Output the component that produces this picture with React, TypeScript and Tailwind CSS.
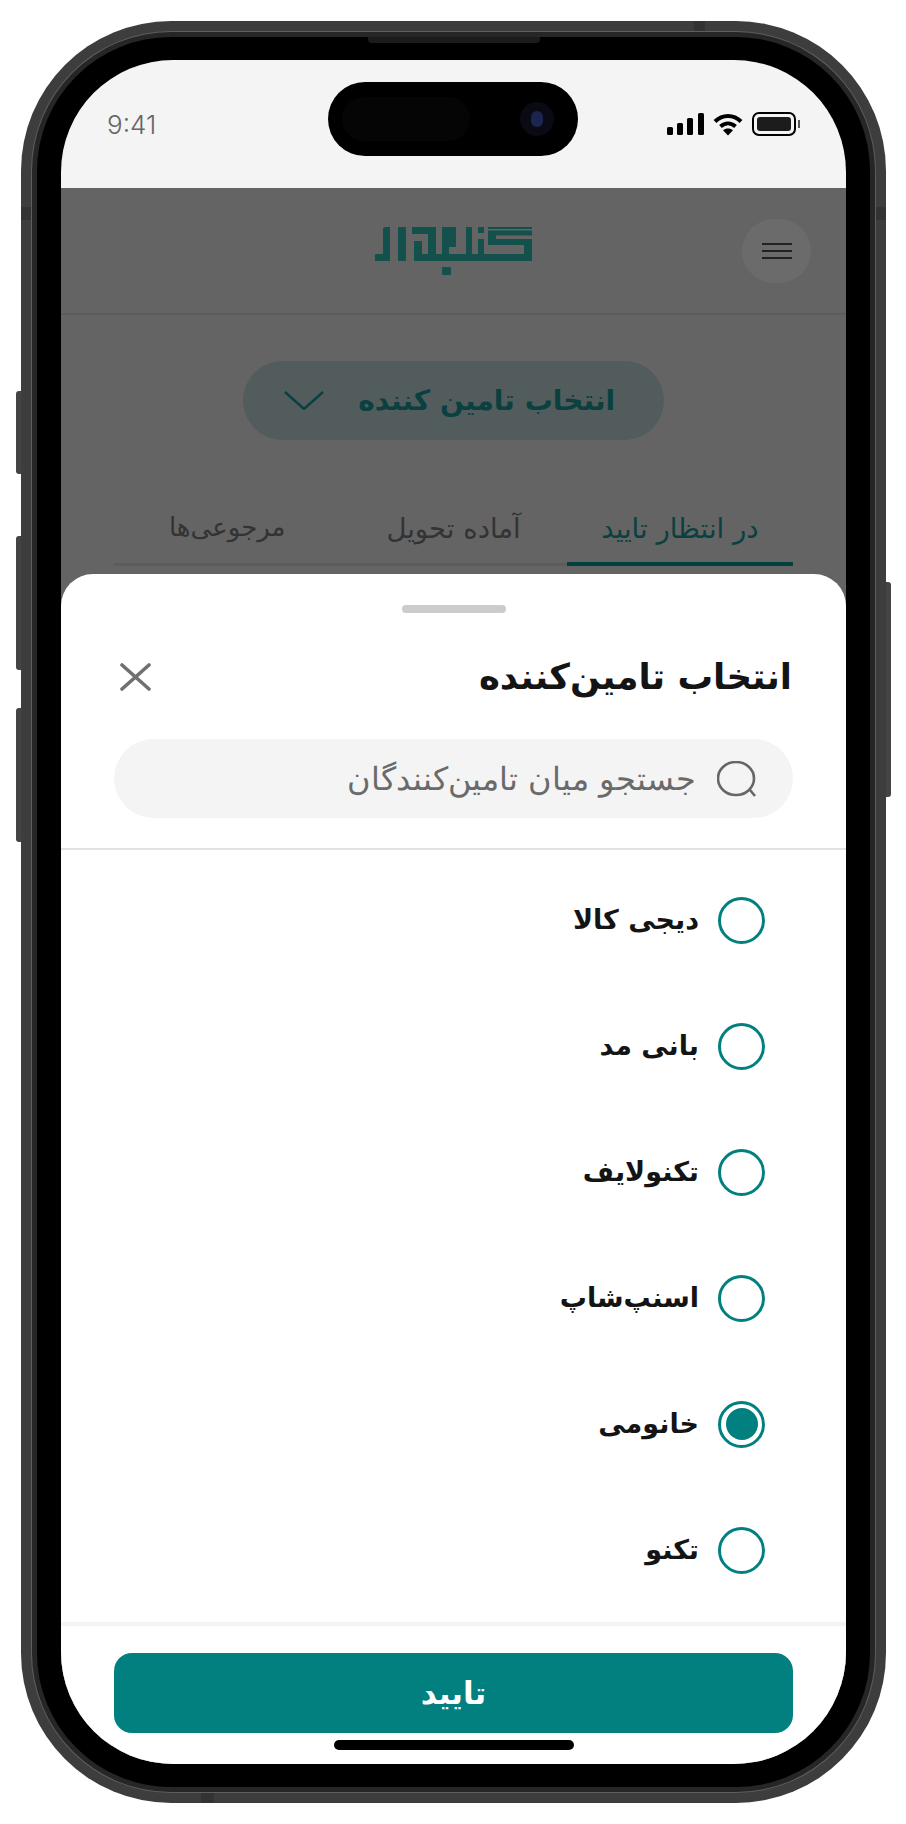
const SUPPLIERS = [
  { name: "دیجی کالا", selected: false },
  { name: "بانی مد", selected: false },
  { name: "تکنولایف", selected: false },
  { name: "اسنپ‌شاپ", selected: false },
  { name: "خانومی", selected: true },
  { name: "تکنو", selected: false },
];

function Logo() {
  return (
    <svg width="158" height="48" viewBox="0 0 158 48" fill="#14504c">
      <path d="M0 27h8V2q0-2 2-2h5v34H0z" />
      <rect x="23" y="0" width="8" height="34" rx="1" />
      <path d="M39 34V14h8v13h6V7H37V0h24v27h88V18h-36V3.500h44v5h-36V12h36v22z" />
      <path d="M67 0h14v20h-7V7h-7v20h-0z" />
      <rect x="67" y="0" width="7" height="27" />
      <rect x="91" y="0" width="6" height="27" />
      <rect x="103" y="0" width="6" height="6" />
      <rect x="103" y="12" width="6" height="15" />
      <rect x="113" y="0" width="44" height="2" />
      <rect x="67" y="40" width="9" height="8" rx="1" />
    </svg>
  );
}

function StatusIcons() {
  return (
    <div className="flex items-center gap-[9px]">
      <svg width="37" height="22" viewBox="0 0 37 22" fill="#000">
        <rect x="0" y="14" width="6" height="8" rx="1.5" />
        <rect x="10" y="10" width="6" height="12" rx="1.5" />
        <rect x="20" y="5" width="6" height="17" rx="1.5" />
        <rect x="31" y="0" width="6" height="22" rx="1.5" />
      </svg>
      <svg width="30" height="23" viewBox="0 0 30 23" fill="none" stroke="#000" strokeWidth="4">
        <path d="M2 8.500C9.500 1 20.500 1 28 8.500" />
        <path d="M7.500 13.500c4.500-4 10.500-4 15 0" />
        <path d="M15 22.500l-5-5.200c3-2.400 7-2.400 10 0z" fill="#000" stroke="none" />
      </svg>
      <div className="flex items-center gap-[2px]">
        <div className="flex h-[24px] w-[44px] items-center rounded-[7px] border-2 border-black p-[3px]">
          <div className="h-full w-full rounded-[3px] bg-[#1c1c1c]" />
        </div>
        <div className="h-[8px] w-[2px] bg-[#555]" />
      </div>
    </div>
  );
}

function Radio({ selected }: { selected: boolean }) {
  return (
    <span className="flex h-[47px] w-[47px] shrink-0 items-center justify-center rounded-full border-[3px] border-[#028080]">
      {selected && <span className="h-[32px] w-[32px] rounded-full bg-[#028080]" />}
    </span>
  );
}

function BackgroundPage() {
  return (
    <div className="flex h-full flex-col bg-[#646464]">
      <div className="grid h-[127px] grid-cols-[1fr_auto_1fr] items-center border-b-2 border-[#5c5c5c]">
        <button className="mr-[35px] flex h-[64px] w-[69px] items-center justify-center justify-self-start rounded-full bg-[#6b6b6b]">
          <svg width="30" height="18" viewBox="0 0 30 18" stroke="#222222" strokeWidth="2">
            <path d="M0 2h30M0 9h30M0 16h30" />
          </svg>
        </button>
        <Logo />
        <div />
      </div>
      <button className="mx-auto mt-[46px] flex h-[79px] w-[421px] items-center justify-between rounded-full bg-[#525c5c] pl-[41px] pr-[49px] text-[28px] font-bold text-[#0a4040]">
        <span>انتخاب تامین کننده</span>
        <svg width="40" height="19" viewBox="0 0 40 19" fill="none" stroke="#0a4040" strokeWidth="2.500">
          <path d="M1 1l19 17L39 1" />
        </svg>
      </button>
      <div className="mx-[53px] mt-[68px] grid grid-cols-3 border-b-[3px] border-[#5c5c5c] text-[27.500px]">
        <div className="-mb-[3px] flex h-[58px] justify-center border-b-4 border-[#044040] text-[#0a4040]">در انتظار تایید</div>
        <div className="flex h-[54px] justify-center text-[#333]">آماده تحویل</div>
        <div className="flex h-[54px] justify-center text-[26px] text-[#333]">مرجوعی‌ها</div>
      </div>
    </div>
  );
}

function SupplierSheet() {
  return (
    <div className="absolute inset-x-0 bottom-0 top-[514px] rounded-t-[32px] bg-white">
      <div className="mx-auto mt-[31px] h-[8px] w-[104px] rounded-full bg-[#cccccc]" />
      <div className="mt-[44px] flex h-[40px] items-center justify-between pl-[59px] pr-[54px]">
        <h2 className="text-[35.500px] font-bold text-[#141414]">انتخاب تامین‌کننده</h2>
        <svg width="31" height="28" viewBox="0 0 31 28" fill="none" stroke="#707070" strokeWidth="3.600" strokeLinecap="round">
          <path d="M2 2l27 24M29 2L2 26" />
        </svg>
      </div>
      <div className="mx-[53px] mt-[42px] flex h-[79px] items-center gap-[21px] rounded-full bg-[#f4f4f4] pr-[36px]">
        <svg width="40" height="36" viewBox="0 0 40 36" fill="none" stroke="#666666" strokeWidth="2.600">
          <ellipse cx="19" cy="17.500" rx="18" ry="16.500" />
          <path d="M33 29l5 6" />
        </svg>
        <span className="text-[32px] font-light text-[#6a6a6a]">جستجو میان تامین‌کنندگان</span>
      </div>
      <div className="mt-[30px] h-[2px] bg-[#e2e2e2]" />
      <ul className="border-b-4 border-[#f4f4f4] pb-[9px] pt-[7px]">
        {SUPPLIERS.map((s) => (
          <li key={s.name} className="flex h-[126px] items-center gap-[19px] pr-[81px] text-[27px] font-bold text-[#141414]">
            <Radio selected={s.selected} />
            <span>{s.name}</span>
          </li>
        ))}
      </ul>
      <div className="px-[53px] pt-[27px]">
        <button className="flex h-[80px] w-full items-center justify-center rounded-[18px] bg-[#028080] text-[31px] font-bold text-white">
          تایید
        </button>
      </div>
    </div>
  );
}

export default function App() {
  return (
    <div className="h-[1824px] w-[906px] bg-white pl-[21px] pt-[21px] font-['DejaVu_Sans',sans-serif]">
      <div className="relative h-[1782px] w-[865px] rounded-[150px] bg-[#3d3d3d] p-[10px]">
        {/* side buttons */}
        <div className="absolute -left-[5px] top-[370px] h-[83px] w-[5px] rounded-l-[3px] bg-[#444444]" />
        <div className="absolute -left-[5px] top-[515px] h-[134px] w-[5px] rounded-l-[3px] bg-[#444444]" />
        <div className="absolute -left-[5px] top-[687px] h-[134px] w-[5px] rounded-l-[3px] bg-[#444444]" />
        <div className="absolute -right-[5px] top-[561px] h-[215px] w-[5px] rounded-r-[3px] bg-[#444444]" />
        {/* antenna bands */}
        <div className="absolute left-0 top-[186px] h-[13px] w-[10px] bg-[#333333]" />
        <div className="absolute right-0 top-[186px] h-[13px] w-[10px] bg-[#333333]" />
        <div className="absolute left-[673px] top-0 h-[10px] w-[11px] bg-[#333333]" />
        <div className="absolute bottom-0 left-[180px] h-[10px] w-[13px] bg-[#333333]" />
        <div className="h-full w-full rounded-[140px] bg-[#5e5e5e] p-[1px]">
          <div className="h-full w-full rounded-[139px] bg-[#262626] p-[5px]">
            <div className="relative h-full w-full rounded-[134px] bg-black px-[24px] pb-[23px] pt-[23px]">
              <div className="absolute left-1/2 top-0 h-[6px] w-[172px] -translate-x-1/2 rounded-b-[4px] bg-[#1c1c1c]" />
              <div className="relative h-full w-full overflow-hidden rounded-[112px] bg-[#f4f4f4]" dir="rtl">
                <div className="flex h-[128px] items-center justify-between px-[46px]" dir="ltr">
                  <span className="font-['Inter',sans-serif] text-[26px] font-light text-[#666]">9:41</span>
                  <StatusIcons />
                </div>
                <div className="absolute left-[267px] top-[22px] flex h-[74px] w-[250px] items-center justify-between rounded-full bg-black pl-[14px] pr-[24px]" dir="ltr">
                  <div className="h-[44px] w-[128px] rounded-full bg-[#050505]" />
                  <div className="flex h-[34px] w-[34px] items-center justify-center rounded-full bg-[#0a0a14]">
                    <div className="h-[16px] w-[12px] rounded-full bg-[#1c2450]" />
                  </div>
                </div>
                <div className="h-[calc(100%-128px)]">
                  <BackgroundPage />
                </div>
                <SupplierSheet />
                <div className="absolute bottom-[14px] left-1/2 h-[10px] w-[240px] -translate-x-1/2 rounded-full bg-black" />
              </div>
            </div>
          </div>
        </div>
      </div>
    </div>
  );
}
